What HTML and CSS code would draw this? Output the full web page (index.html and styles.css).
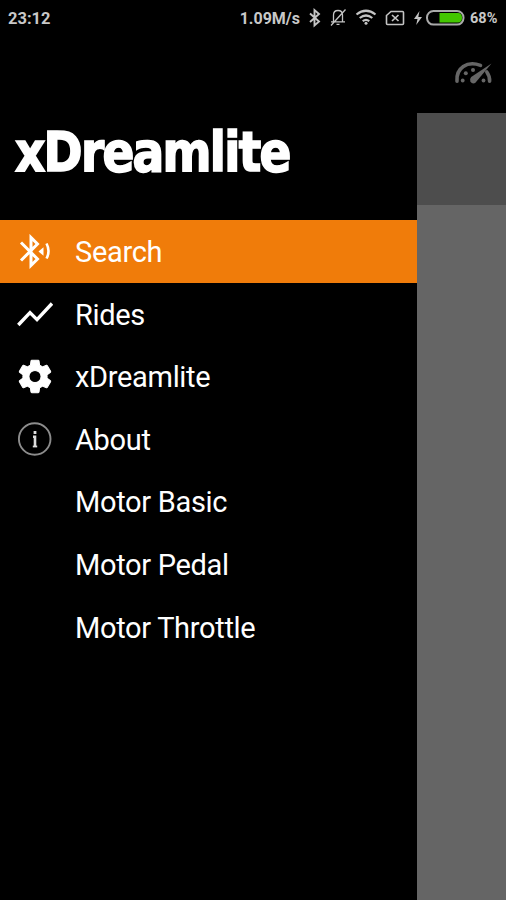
FILE: index.html
```
<!DOCTYPE html>
<html lang="en">
<head>
<meta charset="utf-8">
<title>xDreamlite</title>
<link rel="stylesheet" href="styles.css">
</head>
<body>
<div class="screen">
  <header class="status">
    <span class="clock">23:12</span>
    <span class="speed">1.09M/s</span>
    <svg class="status-icons" viewBox="306 0 164 36" fill="none" stroke="#c4c4c4" stroke-width="1.6">
      <path d="M310 13.500l9 8-4.500 4V10l4.500 4-9 8" stroke-width="1.900"/>
      <path d="M333.500 21.500V15c0-3 2-4.500 4.500-4.500s4.500 1.500 4.500 4.500v6.500M331 21.800h14M336.500 24.300h3M331 25.500L345.500 9.500" stroke-width="1.300"/>
      <path d="M356.500 14.500q9.500-7.500 19 0M359.700 18q6.300-5 12.600 0M362.700 21.200q3.300-2.500 6.600 0" stroke-width="2.200"/>
      <circle cx="366" cy="23.300" r="1.500" fill="#c4c4c4" stroke="none"/>
      <path d="M391 11.500h11.500q1 0 1 1v11q0 1-1 1H387.500q-1 0-1-1V15.500z"/>
      <path d="M392 15l6.500 6M398.500 15l-6.500 6" stroke-width="1.700"/>
      <path d="M419.500 11l-5.500 8h3.500l-1.300 6 5.800-8h-3.700z" fill="#c4c4c4" stroke="none"/>
      <rect x="427" y="11" width="36.500" height="13.600" rx="6.500" stroke="#aaa" stroke-width="2"/>
      <path d="M439.500 13H458q4 0 4 4.800t-4 4.800h-18.500z" fill="#43c600" stroke="none"/>
    </svg>
    <span class="percent">68%</span>
  </header>
  <div class="toolbar">
    <svg width="40" height="28" viewBox="453 58 40 28" fill="none" stroke="#666" stroke-width="3.600" stroke-linecap="round">
      <path d="M457 81.200C456 68 467 60.500 480.500 65.400M486.800 72q3 4 2.800 9.200"/>
      <path d="M491.500 63.500L475.200 83q-3 1.200-4.800-1.200-1.300-2.600.8-4.800z" fill="#666" stroke="none"/>
      <g fill="#666" stroke="none"><circle cx="462.700" cy="80.500" r="1.900"/><circle cx="465.800" cy="73.300" r="2"/><circle cx="473" cy="70" r="2"/><circle cx="483.500" cy="80.500" r="1.900"/></g>
    </svg>
  </div>
  <main class="body">
    <nav class="drawer">
      <h1 class="brand"><span class="brand-name">xDreamlite</span></h1>
      <ul class="menu">
        <li class="item active">
          <svg class="icon" viewBox="0 0 36 36" fill="none" stroke="#fff" stroke-width="3">
            <path d="M4 8.500l16.500 16.500-6.500 6.500V3.500l6.500 6.500L4 26.500"/>
            <path d="M29.500 9.500q4 7.500 0 15" stroke-width="2.600"/>
            <path d="M21.500 17.500l5-4.200v8.400z" fill="#fff" stroke="none"/>
          </svg>Search</li>
        <li class="item">
          <svg class="icon" viewBox="0 0 36 36" fill="none" stroke="#fff" stroke-width="3.400"><path d="M1.300 28L13 15.600l7 7L35 6.500"/></svg>Rides</li>
        <li class="item">
          <svg class="icon" viewBox="1.300 1.600 21.400 21.400" fill="#fff" stroke="#fff" stroke-width=".6"><path d="M19.140 12.940c.04-.3.060-.610.060-.940 0-.320-.020-.640-.070-.940l2.030-1.580c.180-.140.230-.410.120-.610l-1.920-3.320c-.120-.220-.370-.290-.590-.220l-2.390.960c-.500-.380-1.030-.700-1.620-.940L14.400 2.810c-.040-.240-.240-.410-.480-.410h-3.840c-.240 0-.430.170-.470.410L9.250 5.350c-.590.240-1.130.570-1.620.940l-2.390-.960c-.220-.080-.470 0-.590.220L2.740 8.870c-.120.210-.080.470.120.610l2.030 1.580c-.050.300-.090.630-.090.940s.020.640.070.940l-2.030 1.580c-.180.140-.230.410-.120.610l1.920 3.320c.120.220.370.290.590.220l2.390-.960c.500.380 1.030.700 1.620.940l.360 2.540c.050.240.240.410.480.410h3.840c.240 0 .440-.170.470-.410l.360-2.540c.590-.240 1.130-.560 1.620-.940l2.390.960c.220.080.470 0 .590-.220l1.920-3.320c.120-.220.070-.470-.120-.610zM12 15.600A3.600 3.600 0 1 1 12 8.400a3.600 3.600 0 0 1 0 7.200z"/></svg>xDreamlite</li>
        <li class="item">
          <svg class="icon" viewBox="0 0 36 36" fill="none" stroke="#8c8c8c" stroke-width="1.900"><circle cx="17.700" cy="17" r="15.800"/><path d="M18 9v3" stroke="#ddd" stroke-width="2.800"/><path d="M16 14.700h2v10" stroke="#ddd" stroke-width="2.600"/><path d="M15.800 24.500h4.400" stroke="#ddd" stroke-width="1.800"/></svg>About</li>
        <li class="item"><span class="icon"></span>Motor Basic</li>
        <li class="item"><span class="icon"></span>Motor Pedal</li>
        <li class="item"><span class="icon"></span>Motor Throttle</li>
      </ul>
    </nav>
    <div class="content"><div class="content-head"></div></div>
  </main>
</div>
</body>
</html>
```
FILE: styles.css
```
* { box-sizing: border-box; }
body { margin: 0; background: #000; font-family: Roboto, "Liberation Sans", sans-serif; }
.screen { width: 506px; height: 900px; display: flex; flex-direction: column; overflow: hidden; }
.status { height: 36px; display: flex; align-items: center; padding: 0 8px; color: #c8c8c8; font-weight: 700; font-size: 16px; }
.clock { flex: 1; font-size: 16.500px; }
.speed { margin-right: 6px; }
.status-icons { flex: none; width: 164px; height: 36px; }
.percent { font-size: 14.500px; width: 28px; }
.toolbar { height: 77px; flex: none; display: flex; justify-content: flex-end; padding: 22px 13px 0 0; }
.body { flex: 1; display: flex; }
.drawer { width: 416.500px; background: #000; }
.brand { margin: 0; height: 107.300px; padding: 0 0 0 15px; line-height: 79px; }
.brand-name { display: inline-block; font-family: "DejaVu Sans Condensed", "DejaVu Sans", sans-serif; font-stretch: condensed; font-weight: 700; font-size: 55px; letter-spacing: -1.800px; color: #fff; -webkit-text-stroke: 1.600px #fff; transform: scaleX(0.95); transform-origin: left; }
.menu { list-style: none; margin: 0; padding: 0; }
.item { height: 62.600px; display: flex; align-items: center; gap: 22px; padding: 1px 17px 0; color: #fff; font-size: 29px; letter-spacing: -0.320px; }
.active { background: #f07c0a; }
.icon { width: 36px; height: 36px; flex: none; }
.content { flex: 1; background: #656565; }
.content-head { height: 92px; background: #4d4d4d; }
```
